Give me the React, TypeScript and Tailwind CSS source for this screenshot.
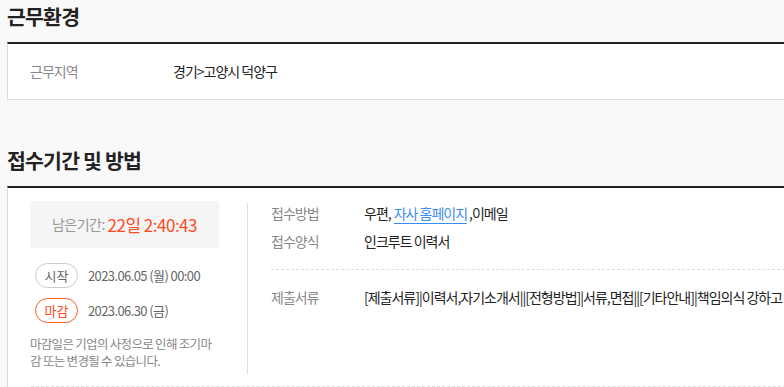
export default function App() {
  return (
    <div className="w-[784px] h-[387px] overflow-hidden bg-[#f9f9f9] text-[#222] font-['Noto_Sans_CJK_KR','Noto_Sans',sans-serif]">
      <div className="pl-[7px]">
        {/* 근무환경 */}
        <h2 className="h-[42px] pt-[1px] text-[20.5px] font-bold tracking-[-0.8px] leading-[30px]">근무환경</h2>
        <div className="w-[1100px] h-[58px] bg-white border-t-2 border-t-[#222] border-l border-b border-[#ddd] flex items-center px-[22px] text-[14px] tracking-[-1px]">
          <span className="w-[143px] text-[#888]">근무지역</span>
          <span>경기&gt;고양시 덕양구</span>
        </div>

        {/* 접수기간 및 방법 */}
        <h2 className="mt-[45px] h-[41px] text-[20.5px] font-bold tracking-[-0.8px] leading-[30px]">접수기간 및 방법</h2>
        <div className="w-[1100px] bg-white border-t-2 border-t-[#222] border-l border-[#ddd] pt-[13px] pl-[22px]">
          <div className="flex">
            <div className="w-[217px] pr-[28px]">
              <div className="h-[47px] rounded-[3px] bg-[#f5f5f5] flex items-center justify-center tracking-[-0.5px]">
                <span className="text-[14px] text-[#999]">남은기간:&nbsp;</span>
                <span className="text-[17px] text-[#ff4a1f]">22일 2:40:43</span>
              </div>
              <div className="mt-[15px] flex items-center pl-[5px]">
                <span className="w-[43px] h-[25px] rounded-full border border-[#ccc] text-[13px] text-[#666] flex items-center justify-center">시작</span>
                <span className="ml-[10px] text-[13px] text-[#666] tracking-[-0.6px]">2023.06.05 (월) 00:00</span>
              </div>
              <div className="mt-[10px] flex items-center pl-[5px]">
                <span className="w-[43px] h-[25px] rounded-full border border-[#ff5a26] text-[13px] text-[#ff4a1f] flex items-center justify-center">마감</span>
                <span className="ml-[10px] text-[13px] text-[#666] tracking-[-0.6px]">2023.06.30 (금)</span>
              </div>
              <p className="mt-[12px] pr-[4px] text-[12.5px] leading-[17px] text-[#888] tracking-[-0.7px]">
                마감일은 기업의 사정으로 인해 조기마감 또는 변경될 수 있습니다.
              </p>
            </div>
            <div className="w-px h-[171px] mt-[2px] bg-[#ddd]" />
            <div className="pl-[23px] -mt-[2px] text-[14px] tracking-[-1px]">
              <div className="flex h-[28px] items-center">
                <span className="w-[93px] text-[#888]">접수방법</span>
                <span>
                  우편,<span className="ml-[3px] mr-[2px] text-[#3a8df0] border-b border-[#3a8df0]">자사 홈페이지</span>,이메일
                </span>
              </div>
              <div className="flex h-[28px] items-center">
                <span className="w-[93px] text-[#888]">접수양식</span>
                <span>인크루트 이력서</span>
              </div>
              <div className="mt-[14px] w-[800px] border-t border-dashed border-[#ddd]" />
              <div className="flex mt-[16px] h-[22px] items-center whitespace-nowrap">
                <span className="w-[93px] text-[#888]">제출서류</span>
                <span>[제출서류]|이력서,자기소개서||[전형방법]|서류,면접||[기타안내]|책임의식 강하고 성실하신 분</span>
              </div>
            </div>
          </div>
          <div className="mt-[12px] w-[800px] border-t border-dashed border-[#ddd] ml-[1px]" />
        </div>
      </div>
    </div>
  );
}
